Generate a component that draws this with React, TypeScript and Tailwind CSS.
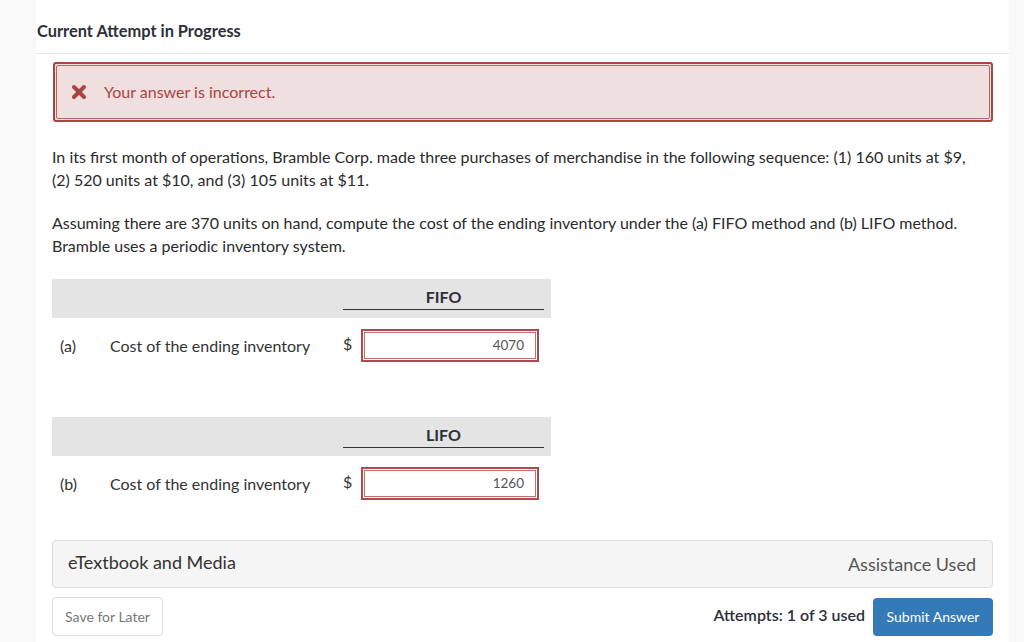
import React from "react";

function Answer({ value }: { value: string }) {
  return (
    <div className="w-[178px] h-[33px] border-2 border-[#b04a4a] p-px bg-white">
      <div className="h-full w-full border border-[#c46d6d] flex items-center justify-end pr-[11px] text-[13.5px] text-[#555]">
        {value}
      </div>
    </div>
  );
}

function XIcon() {
  return (
    <svg width="16" height="16" viewBox="0 0 16 16" className="shrink-0">
      <path d="M3 3 L13 13 M13 3 L3 13" stroke="#a94442" strokeWidth="4" strokeLinecap="round" />
    </svg>
  );
}

function Block({ label, head, value }: { label: string; head: string; value: string }) {
  return (
    <div className="w-[499px]">
      <div className="h-[39px] bg-[#e4e4e4] flex">
        <div className="w-[291px]" />
        <div className="w-[201px] h-[31px] border-b border-[#333] flex items-end justify-center pb-px text-[16px] font-bold text-[#2d3038]">
          {head}
        </div>
      </div>
      <div className="flex items-center pt-[11px] text-[16px] text-[#333]">
        <span className="w-[58px] pl-[8px]">{label}</span>
        <span className="w-[233px]">Cost of the ending inventory</span>
        <span className="w-[18px] -mt-[5px]">$</span>
        <Answer value={value} />
      </div>
    </div>
  );
}

export default function App() {
  return (
    <div className="min-h-[642px] bg-[#f9f9f9] flex pl-[36px] font-['Lato',sans-serif]">
      <div className="w-[973px] bg-white">
        <div className="h-[54px] border-b border-[#e8e8e8] pt-[20px] pl-px text-[16.4px] font-bold text-[#2d3038] leading-[22px]">
          Current Attempt in Progress
        </div>
        <div className="pl-[17px] pt-[8px]">
          <div className="w-[940px] h-[60px] border-2 border-[#a94442] p-px rounded-[3px] bg-[#f0dfdf]">
            <div className="h-full border border-[#b86363] flex items-center pl-[14px] rounded-[2px]">
              <XIcon />
              <span className="ml-[17px] text-[16px] text-[#a94442]">Your answer is incorrect.</span>
            </div>
          </div>
        </div>
        <div className="pl-[16px] pt-[23px] pr-[30px] text-[16px] leading-[23px] text-[#2b2b2b]">
          <p>
            In its first month of operations, Bramble Corp. made three purchases of merchandise in the following sequence: (1) 160 units at $9,
            (2) 520 units at $10, and (3) 105 units at $11.
          </p>
          <p className="mt-[20px]">
            Assuming there are 370 units on hand, compute the cost of the ending inventory under the (a) FIFO method and (b) LIFO method.
            Bramble uses a periodic inventory system.
          </p>
          <div className="mt-[22px]">
            <Block label="(a)" head="FIFO" value="4070" />
            <div className="h-[55px]" />
            <Block label="(b)" head="LIFO" value="1260" />
          </div>
          <div className="mt-[40px] w-[941px] h-[48px] bg-[#f5f5f5] border border-[#dddddd] rounded-[4px] flex items-center justify-between pl-[15px] pr-[16px]">
            <span className="text-[18px] text-[#333] -mt-[4px]">eTextbook and Media</span>
            <span className="text-[18px] text-[#555]">Assistance Used</span>
          </div>
          <div className="mt-[9px] w-[941px] flex items-center">
            <div className="w-[111px] h-[39px] border border-[#dddddd] rounded-[4px] flex items-center justify-center text-[14px] text-[#777]">
              Save for Later
            </div>
            <div className="flex-1" />
            <span className="text-[16px] font-semibold text-[#2d3038] mr-[8px] -mt-[4px]">Attempts: 1 of 3 used</span>
            <div className="w-[120px] h-[38px] bg-[#337ab7] rounded-[4px] flex items-center justify-center text-[14px] text-white">
              Submit Answer
            </div>
          </div>
        </div>
      </div>
    </div>
  );
}
